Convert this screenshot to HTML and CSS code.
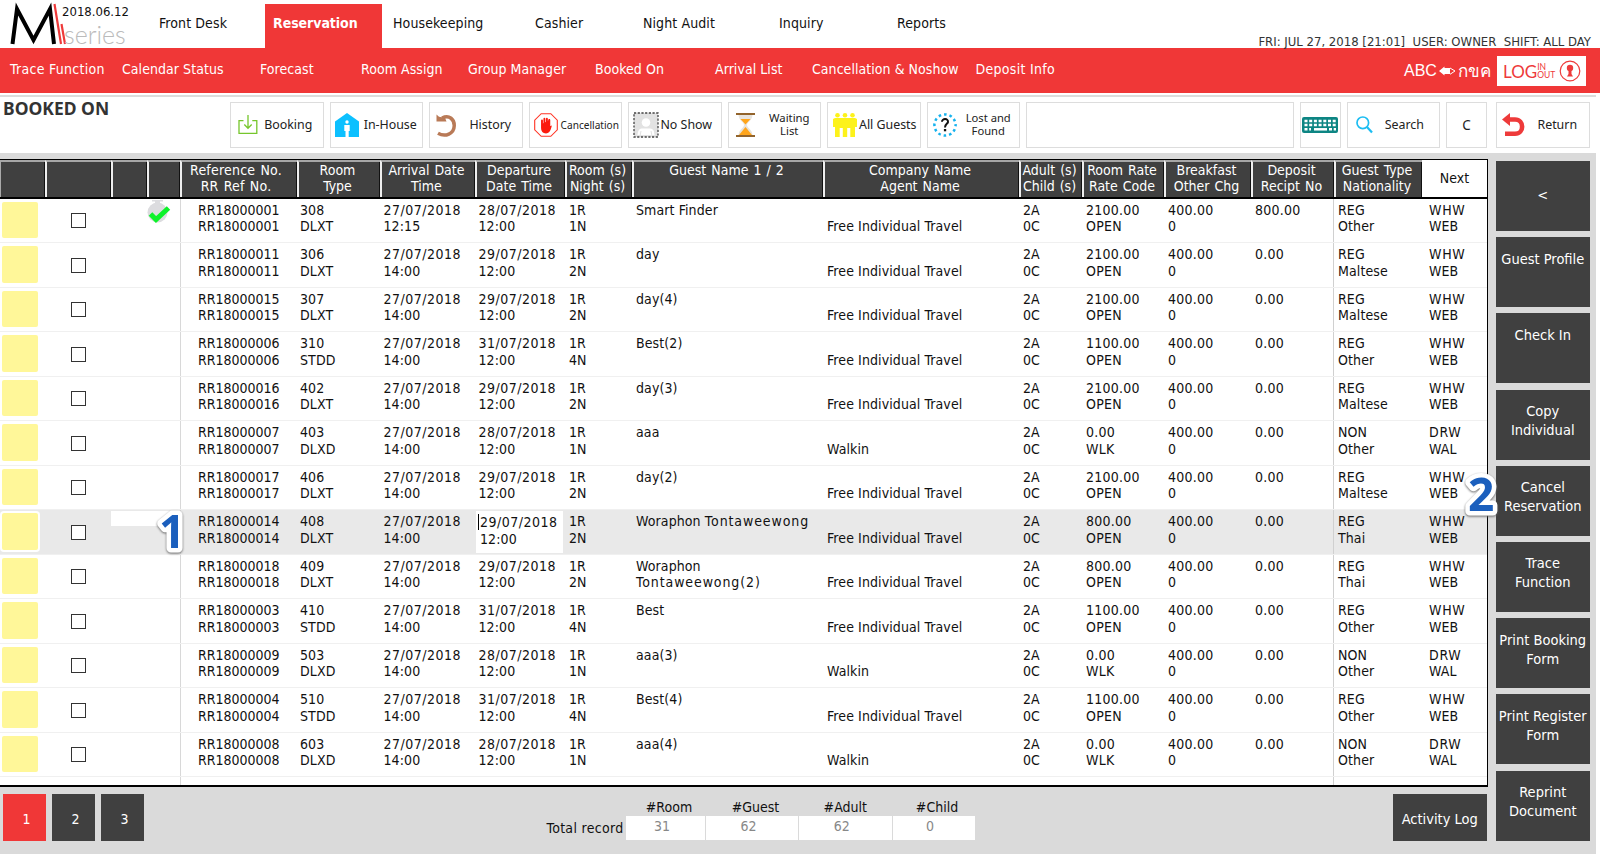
FILE: index.html
```html
<!DOCTYPE html>
<html lang="en">
  <head>
    <meta charset="UTF-8" />
    <title>Booked On</title>
    <link rel="stylesheet" href="styles.css">
  </head>
  <body>
    <header class="topbar">
      <div class="logo">
        <svg class="logo-mark" width="66" height="46" viewBox="0 0 66 46">
          <path d="M12.500 44 L17 9 L33.500 40 L50 9 L54 44" fill="none" stroke="#000" stroke-width="4" stroke-miterlimit="8" />
          <path d="M54.500 4 L61 44 M61.500 24 L65 44" stroke="#ee3a3a" stroke-width="2.200" />
        </svg>
        <div class="logo-text">
          <span class="logo-date">2018.06.12</span>
          <span class="logo-name">series</span>
        </div>
      </div>
      <nav class="main-nav">
        <a>Front Desk</a>
        <a class="active">Reservation</a>
        <a>Housekeeping</a>
        <a>Cashier</a>
        <a>Night Audit</a>
        <a>Inquiry</a>
        <a>Reports</a>
      </nav>
      <div class="session">FRI: JUL 27, 2018 [21:01]&nbsp; USER: OWNER&nbsp; SHIFT: ALL DAY</div>
    </header>

    <div class="subbar">
      <nav class="sub-nav">
        <a>Trace Function</a>
        <a>Calendar Status</a>
        <a>Forecast</a>
        <a>Room Assign</a>
        <a>Group Manager</a>
        <a>Booked On</a>
        <a>Arrival List</a>
        <a>Cancellation &amp; Noshow</a>
        <a>Deposit Info</a>
      </nav>
      <div class="lang">
        <span>ABC</span>
        <svg width="17" height="12" viewBox="0 0 17 12">
          <path d="M0 6 L5.500 1.500 V3 H11 V9 H5.500 V10.500 Z" fill="#fff" />
          <path d="M11 3 L16 6 L11 9.300" fill="none" stroke="#fff" stroke-width="1" />
        </svg>
        <span class="thai">กขค</span>
      </div>
      <div class="logout">
        <span class="log">LOG</span>
        <span class="inout"><span>IN</span><span>OUT</span></span>
        <svg width="22" height="22" viewBox="0 0 22 22">
          <circle cx="11" cy="11" r="9.800" fill="none" stroke="#ee3a3a" stroke-width="1.200" />
          <circle cx="11" cy="8" r="3.200" fill="#ee3a3a" />
          <path d="M9.500 9 H12.500 V14 L14 16.500 H8 L9.500 14 Z" fill="#ee3a3a" />
        </svg>
      </div>
    </div>

    <div class="toolbar">
      <h1>BOOKED ON</h1>
      <div class="tools">
        <button class="tool t-booking">
          <svg width="20" height="20" viewBox="0 0 20 20" fill="none" stroke="#76c62c" stroke-width="1.300">
            <path d="M5.500 5.700 H1 V18.300 H18.800 V5.700 H14.300" />
            <path d="M10 0 V13 M6.300 9.500 L10 13.300 L13.700 9.500" />
          </svg>
          <span>Booking</span>
        </button>
        <button class="tool t-inhouse">
          <svg width="24" height="24" viewBox="0 0 24 24">
            <path d="M12 0 L24 8.500 V24 H0 V8.500 Z" fill="#0cc0ff" />
            <circle cx="12" cy="9" r="1.700" fill="#fff" />
            <path d="M9.300 12 H14.700 V18 H13.700 V24 H10.500 V18 H9.300 Z" fill="#fff" />
          </svg>
          <span>In-House</span>
        </button>
        <button class="tool t-history">
          <svg width="20" height="23" viewBox="0 0 20 23">
            <path d="M0.500 0.500 L3 2.800 L9 3.800 L10.500 7.500 H0.500 Z" fill="#b97a57" />
            <path d="M6 4 C13.500 0.500 18.500 5.500 18.200 12 C18 19.500 9.500 23.500 2 19.300" fill="none" stroke="#b97a57" stroke-width="3.500" />
          </svg>
          <span>History</span>
        </button>
        <button class="tool t-cancel">
          <svg width="24" height="24" viewBox="0 0 24 24">
            <path d="M7.200 0.700 H16.800 L23.300 7.200 V16.800 L16.800 23.300 H7.200 L0.700 16.800 V7.200 Z" fill="#fff" stroke="#ff3324" stroke-width="1.100" />
            <path d="M8 11 V15 C8 18 9.500 19.500 12 19.500 C14.500 19.500 15.500 18 16.500 14 L15.300 14.500 V7 M8 12 V7.500 M10.400 12 V5.700 M12.900 12 V5.700 M15.200 12 V7" fill="#fb1b0e" stroke="#fb1b0e" stroke-width="1.900" stroke-linecap="round" />
          </svg>
          <span>Cancellation</span>
        </button>
        <button class="tool t-noshow">
          <svg width="26" height="26" viewBox="0 0 26 26">
            <rect x="1" y="1" width="24" height="24" fill="#e2e2e2" stroke="#444" stroke-width="1.300" stroke-dasharray="2.200 1.500" />
            <circle cx="13" cy="10.500" r="4.300" fill="#fff" />
            <path d="M4.500 23 C5 16 8.500 16.500 9 16.500 H17 C21 17 21 19 21.500 23 Z" fill="#fff" />
            <path d="M8 19 L7 24 M18 19 L19 24" stroke="#e2e2e2" />
          </svg>
          <span>No Show</span>
        </button>
        <button class="tool t-waiting">
          <svg width="19" height="24" viewBox="0 0 19 24">
            <path d="M2.500 2 C3 8 8 9 8 12 C8 15 3 16 2.500 22 H16.500 C16 16 11 15 11 12 C11 9 16 8 16.500 2 Z" fill="#e8e4de" />
            <path d="M4.500 6 H14.500 L9.500 11.500 Z M9.500 14 L16 22 H3 Z" fill="#ffa51c" />
            <path d="M0 1 H19 M0 23 H19" stroke="#93642c" stroke-width="2" />
          </svg>
          <span>Waiting<br />List</span>
        </button>
        <button class="tool t-guests">
          <svg width="24" height="24" viewBox="0 0 24 24" fill="#fdf21b">
            <circle cx="4.500" cy="2.300" r="2.300" /><circle cx="12" cy="2.300" r="2.300" /><circle cx="19.500" cy="2.300" r="2.300" />
            <path d="M0 6 L2 5 H22 L24 6 V14 H22 V24 H17.300 V15 H14.200 V24 H9.800 V15 H6.700 V24 H2 V14 H0 Z" />
          </svg>
          <span>All Guests</span>
        </button>
        <button class="tool t-lost">
          <svg width="24" height="24" viewBox="0 0 24 24">
            <circle cx="12" cy="12" r="10.600" fill="none" stroke="#16b2ee" stroke-width="2.500" stroke-dasharray="2.600 2.950" stroke-dashoffset="1.300" />
            <path d="M9 8.800 C9 5 15.500 5.300 15 9 C14.700 11 12 11 12 14.500" fill="none" stroke="#111" stroke-width="2" />
            <rect x="10.900" y="16" width="2.300" height="2.300" fill="#111" />
          </svg>
          <span>Lost and<br />Found</span>
        </button>
        <div class="tool tool-blank"></div>
        <button class="tool tool-keys">
          <svg width="36" height="16" viewBox="0 0 36 16">
            <rect width="36" height="16" rx="2" fill="#0d8583" />
            <path d="M2.500 4 H34 M2.500 8 H34" stroke="#fff" stroke-width="2.700" stroke-dasharray="3 1.700" />
            <path d="M2.500 12.300 H9 M27 12.300 H34" stroke="#fff" stroke-width="2.500" stroke-dasharray="3 1.700" />
            <path d="M12 12.300 H25" stroke="#fff" stroke-width="2.500" />
          </svg>
        </button>
        <button class="tool t-search">
          <svg width="17" height="18" viewBox="0 0 17 18" fill="none" stroke="#1cbdf2">
            <circle cx="6.800" cy="6.800" r="5.800" stroke-width="1.700" />
            <path d="M11 11 L16 16.500" stroke-width="2.200" />
          </svg>
          <span>Search</span>
        </button>
        <button class="tool tool-c">C</button>
        <button class="tool t-return">
          <svg width="23" height="24" viewBox="0 0 23 24">
            <path d="M0 6.500 L8 0 V13 Z" fill="#ee3a3a" />
            <path d="M6 6.500 H13 C22.500 6.500 22.500 20.800 13 20.800 H3" fill="none" stroke="#ee3a3a" stroke-width="4.600" />
          </svg>
          <span>Return</span>
        </button>
      </div>
    </div>

    <main class="main">
      <section class="content">
        <div class="grid">
          <div class="grid-head grid-cols">
            <div></div>
            <div></div>
            <div></div>
            <div></div>
            <div>Reference No.<br />RR Ref No.</div>
            <div>Room<br />Type</div>
            <div>Arrival Date<br />Time</div>
            <div>Departure<br />Date Time</div>
            <div>Room (s)<br />Night (s)</div>
            <div>Guest Name 1 / 2</div>
            <div>Company Name<br />Agent Name</div>
            <div>Adult (s)<br />Child (s)</div>
            <div>Room Rate<br />Rate Code</div>
            <div>Breakfast<br />Other Chg</div>
            <div>Deposit<br />Recipt No</div>
            <div>Guest Type<br />Nationality</div>
            <div class="next">Next</div>
          </div>
          <div id="rows"></div>
          <div class="grid-rest grid-cols"><div class="line-a"></div><div class="line-b"></div></div>
        </div>

        <footer class="footer">
          <div class="pages">
            <button class="current">1</button>
            <button>2</button>
            <button>3</button>
          </div>
          <div class="totals">
            <span></span>
            <span class="right">#Room</span>
            <span class="right">#Guest</span>
            <span>#Adult</span>
            <span class="right">#Child</span>
            <span class="total-label">Total record</span>
            <span class="num">31</span>
            <span class="num">62</span>
            <span class="num">62</span>
            <span class="num">0</span>
          </div>
          <button class="activity">Activity Log</button>
        </footer>
      </section>

      <aside class="side">
        <button class="back">&lt;</button>
        <button>Guest Profile</button>
        <button>Check In</button>
        <button>Copy<br />Individual</button>
        <button>Cancel<br />Reservation</button>
        <button>Trace<br />Function</button>
        <button>Print Booking<br />Form</button>
        <button>Print Register<br />Form</button>
        <button>Reprint<br />Document</button>
      </aside>
    </main>

    <svg class="step step-1" width="44" height="52" viewBox="0 0 44 52"><text x="8" y="42">1</text></svg>
    <svg class="step step-2" width="44" height="52" viewBox="0 0 44 52"><text x="8" y="42">2</text></svg>

    <script src="rows.js"></script>
  </body>
</html>
```
FILE: styles.css
```css
* {
  box-sizing: border-box;
}
body {
  margin: 0;
  width: 1600px;
  height: 855px;
  overflow: hidden;
  position: relative;
  background: #fff;
  color: #111;
  font-family: "DejaVu Sans Condensed", "DejaVu Sans", sans-serif;
  font-stretch: condensed;
  font-size: 14px;
}
button {
  font: inherit;
  border: none;
  padding: 0;
  margin: 0;
  cursor: pointer;
}
svg {
  display: block;
  flex: none;
}

/* top bar */
.topbar {
  display: flex;
  height: 48px;
}
.logo {
  display: flex;
  width: 159px;
}
.logo-text {
  display: flex;
  flex-direction: column;
  margin-left: -4px;
  width: 70px;
}
.logo-date {
  font-size: 13px;
  line-height: 16px;
  padding-top: 4px;
}
.logo-name {
  font-family: Lato, sans-serif;
  font-weight: 300;
  font-stretch: normal;
  font-size: 25px;
  line-height: 29px;
  padding-left: 2px;
  color: #bbb;
}
.main-nav {
  display: grid;
  grid-template-columns: 106px 128px 142px 108px 136px 118px 100px;
  line-height: 38px;
  letter-spacing: 0.100px;
}
.main-nav .active {
  background: #f03737;
  color: #fff;
  font-weight: bold;
  letter-spacing: -0.050px;
  width: 117px;
  margin-top: 4px;
  padding-left: 8px;
}
.main-nav a:not(.active) {
  padding-top: 4px;
}
.session {
  margin-left: auto;
  padding: 34px 9px 0 0;
  font-size: 13px;
  line-height: 16px;
  white-space: nowrap;
  color: #333;
}

/* red bar */
.subbar {
  display: flex;
  height: 45px;
  background: #f03737;
  color: #fff;
}
.sub-nav {
  display: grid;
  grid-template-columns: 112px 138px 101px 107px 127px 120px 97px 163.500px 338.500px;
  padding-left: 10px;
  line-height: 42px;
  letter-spacing: 0.050px;
  white-space: nowrap;
  width: 1404px;
}
.sub-nav a:first-child,
.sub-nav a:last-child {
  letter-spacing: 0.300px;
}
.lang {
  display: flex;
  align-items: center;
  gap: 2px;
  width: 93px;
  font-family: "Liberation Sans", sans-serif;
  font-stretch: normal;
  font-size: 16px;
}
.thai {
  font-size: 17px;
}
.logout {
  display: flex;
  align-items: center;
  align-self: flex-start;
  margin-top: 8px;
  width: 89px;
  height: 30px;
  padding-left: 6px;
  background: #fff;
  color: #ee3a3a;
  font-family: Lato, sans-serif;
  font-stretch: normal;
}
.log {
  font-size: 17px;
}
.inout {
  display: flex;
  flex-direction: column;
  width: 22px;
  font-size: 8.500px;
  line-height: 8px;
}

/* toolbar */
.toolbar {
  display: flex;
  width: 1596px;
  height: 60px;
  margin-top: 2px;
  border-top: 2px solid #dcdcdc;
}
.toolbar h1 {
  margin: 0;
  width: 230px;
  padding-left: 3px;
  font-family: "Noto Sans", sans-serif;
  font-size: 17.500px;
  line-height: 23px;
  color: #333;
}
.tools {
  display: grid;
  grid-template-columns: repeat(8, 93.500px) 267.500px 41px 93.500px 41px 93.500px;
  column-gap: 6px;
  padding-top: 5px;
  height: 51px;
}
.tool {
  display: flex;
  align-items: center;
  border: 1px solid #ddd;
  background: #fff;
  color: #222;
  font-family: "Noto Sans", sans-serif;
  font-stretch: normal;
  font-size: 12.400px;
  line-height: 13px;
  text-align: center;
  white-space: nowrap;
}
.tool span {
  flex: 1;
  padding-bottom: 2px;
}
.t-booking {
  padding: 0 8px 0 7px;
}
.t-booking span {
  padding-left: 4px;
}
.t-inhouse {
  padding: 0 4px 0 4px;
}
.t-inhouse span {
  padding-left: 4px;
}
.t-history {
  padding: 0 10px 0 6px;
}
.t-history span {
  padding-left: 13px;
}
.t-cancel {
  padding: 0 2px 0 4px;
  font-size: 10.100px;
}
.t-cancel span {
  padding: 0 0 0 3px;
}
.t-noshow {
  padding: 0 7px 0 4px;
}
.t-waiting {
  padding: 0 10px 0 7px;
  font-size: 11.300px;
}
.t-waiting span {
  padding-left: 14px;
}
.t-guests {
  padding: 0 2px 0 5px;
}
.t-guests span {
  padding-left: 1px;
}
.t-lost {
  padding: 0 8px 0 5px;
  font-size: 11.200px;
}
.t-lost span {
  padding-left: 9px;
}
.tool-keys {
  justify-content: center;
}
.t-search {
  padding: 0 13px 0 8px;
}
.t-search span {
  padding-left: 10px;
}
.tool-c {
  justify-content: center;
  font-size: 13.500px;
}
.t-return {
  margin-left: 3px;
  width: 93.500px;
  padding: 0 11px 0 5px;
}
.t-return span {
  padding-left: 12px;
}

/* main area */
.main {
  display: flex;
  width: 1596px;
  height: 701px;
  margin-top: -2px;
  padding-top: 6px;
  background: #dadada;
}
.content {
  width: 1488px;
}
.grid {
  height: 628px;
  border: solid #000;
  border-width: 1.500px 1.500px 2px 0;
  background: #fff;
  overflow: hidden;
}
.grid-cols {
  display: grid;
  grid-template-columns: 45px 66px 36px 33px 117px 83px 95px 90px 67px 191px 196px 63px 82px 87px 83px 88px 65px;
}
.grid-head {
  height: 38.500px;
  border-bottom: 2px solid #000;
  background: #404040;
  color: #fff;
  text-align: center;
  line-height: 16.400px;
  white-space: nowrap;
  word-spacing: 1px;
}
.grid-head div {
  padding-right: 4px;
  border-left: 2px solid #eee;
  border-top: 2px solid #a6a6a6;
  box-shadow: inset -1px 0 #111;
}
.grid-head div:first-child {
  border-left: 1px solid #aaa;
}
.grid-head div:nth-child(5) {
  letter-spacing: 0.200px;
  padding-right: 7px;
}
.grid-head .next {
  padding-right: 0;
  border: none;
  box-shadow: none;
  background: #fff;
  color: #111;
  line-height: 36px;
}
.row {
  height: 44.530px;
  border-bottom: 1.500px solid #f0f0f0;
}
.cell {
  padding: 3.300px 0 0 4px;
  line-height: 16.400px;
  letter-spacing: 0.100px;
  white-space: pre-line;
}
.cell.ref {
  padding-left: 17px;
  border-left: 1.500px solid #d8d8d8;
  letter-spacing: 0;
}
.cell.room {
  padding-left: 3px;
}
.cell.date {
  padding-left: 3.500px;
}
.cell.date::first-line {
  letter-spacing: 0.500px;
}
.cell.money {
  letter-spacing: 0.250px;
}
.surname {
  letter-spacing: 0.900px;
}
.cell.type {
  margin-left: -1px;
  border-left: 1px solid #d0d0d0;
}
.cell.next-code {
  padding-left: 7px;
}
.cell.next-code::first-line {
  letter-spacing: 0.700px;
}
.mark {
  display: block;
  width: 36px;
  height: 36.500px;
  margin: 3px 0 0 2px;
  border-radius: 2px;
  background: #fff799;
}
.check {
  display: block;
  width: 15px;
  height: 15px;
  margin: 14.500px 0 0 25.500px;
  border: 1px solid #333;
  background: #fff;
}
.watch {
  margin-top: 1px;
}
.row.selected {
  background: #e9e9e9;
}
.selected .mark {
  box-shadow: 0 0 0 2px #fff;
}
.selected .patch {
  width: 69px;
  height: 15px;
  margin-top: 1px;
  background: #fff;
}
.selected .editing {
  width: 87px;
  height: 42px;
  margin: 1px 0 0 1px;
  padding-left: 4px;
  background: linear-gradient(#000, #000) 2px 3px / 1px 16px no-repeat, #fff;
}
.grid-rest {
  height: 12px;
}
.line-a {
  grid-column: 5;
  border-left: 1.500px solid #d8d8d8;
}
.line-b {
  grid-column: 16;
  margin-left: -1px;
  border-left: 1px solid #d0d0d0;
}

/* footer */
.footer {
  display: flex;
  padding: 6.500px 1.500px 0 3px;
}
.pages {
  display: flex;
  gap: 6px;
  width: 542px;
}
.pages button,
.activity,
.side button {
  background: #404040;
  color: #fff;
}
.pages button {
  width: 43px;
  height: 47px;
  padding: 4px 0 0 4px;
}
.pages .current {
  background: #f03737;
}
.totals {
  display: grid;
  grid-template-columns: 80px 79px 92px 92.500px 82px;
  grid-template-rows: 22px 24px;
  column-gap: 1px;
  text-align: center;
  line-height: 26px;
}
.totals .right {
  padding-left: 7px;
}
.total-label {
  line-height: 24px;
  letter-spacing: 0.300px;
  white-space: nowrap;
}
.num {
  padding-right: 7px;
  background: #fff;
  color: #888;
  line-height: 21px;
}
.activity {
  width: 93.500px;
  height: 47px;
  margin-left: auto;
  padding-top: 4px;
  font-size: 14.500px;
}

/* side buttons */
.side {
  display: flex;
  flex-direction: column;
  gap: 6.200px;
  width: 93.500px;
  margin: 2px 0 0 8px;
}
.side button {
  display: flex;
  justify-content: center;
  height: 70px;
  padding-top: 12.500px;
  font-size: 14.500px;
  line-height: 19px;
  white-space: nowrap;
}
.side .back {
  padding-top: 25px;
}

/* numbered steps over the screen */
.step {
  position: absolute;
  overflow: visible;
  filter: drop-shadow(0 1px 1px #666);
}
.step text {
  font-family: "Noto Sans", sans-serif;
  font-stretch: normal;
  font-weight: bold;
  font-size: 46px;
  fill: #1b5fbd;
  stroke: #fff;
  stroke-width: 9px;
  stroke-linejoin: round;
  paint-order: stroke;
}
.step-1 {
  left: 151px;
  top: 506px;
}
.step-2 {
  left: 1460px;
  top: 469px;
}
```
FILE: rows.js
```js
// ref, room, type, arrival time, departure day, nights, guest, agent, rate, code, deposit, guest type, nationality, next
const bookings = [
  ["RR18000001", "308", "DLXT", "12:15", "28", "1N", "Smart Finder", "Free Individual Travel", "2100.00", "OPEN", "800.00", "REG", "Other", "WHW\nWEB"],
  ["RR18000011", "306", "DLXT", "14:00", "29", "2N", "day", "Free Individual Travel", "2100.00", "OPEN", "0.00", "REG", "Maltese", "WHW\nWEB"],
  ["RR18000015", "307", "DLXT", "14:00", "29", "2N", "day(4)", "Free Individual Travel", "2100.00", "OPEN", "0.00", "REG", "Maltese", "WHW\nWEB"],
  ["RR18000006", "310", "STDD", "14:00", "31", "4N", "Best(2)", "Free Individual Travel", "1100.00", "OPEN", "0.00", "REG", "Other", "WHW\nWEB"],
  ["RR18000016", "402", "DLXT", "14:00", "29", "2N", "day(3)", "Free Individual Travel", "2100.00", "OPEN", "0.00", "REG", "Maltese", "WHW\nWEB"],
  ["RR18000007", "403", "DLXD", "14:00", "28", "1N", "aaa", "Walkin", "0.00", "WLK", "0.00", "NON", "Other", "DRW\nWAL"],
  ["RR18000017", "406", "DLXT", "14:00", "29", "2N", "day(2)", "Free Individual Travel", "2100.00", "OPEN", "0.00", "REG", "Maltese", "WHW\nWEB"],
  ["RR18000014", "408", "DLXT", "14:00", "29", "2N", 'Woraphon <span class="surname">Tontaweewong</span>', "Free Individual Travel", "800.00", "OPEN", "0.00", "REG", "Thai", "WHW\nWEB"],
  ["RR18000018", "409", "DLXT", "14:00", "29", "2N", 'Woraphon\n<span class="surname">Tontaweewong(2)</span>', "Free Individual Travel", "800.00", "OPEN", "0.00", "REG", "Thai", "WHW\nWEB"],
  ["RR18000003", "410", "STDD", "14:00", "31", "4N", "Best", "Free Individual Travel", "1100.00", "OPEN", "0.00", "REG", "Other", "WHW\nWEB"],
  ["RR18000009", "503", "DLXD", "14:00", "28", "1N", "aaa(3)", "Walkin", "0.00", "WLK", "0.00", "NON", "Other", "DRW\nWAL"],
  ["RR18000004", "510", "STDD", "14:00", "31", "4N", "Best(4)", "Free Individual Travel", "1100.00", "OPEN", "0.00", "REG", "Other", "WHW\nWEB"],
  ["RR18000008", "603", "DLXD", "14:00", "28", "1N", "aaa(4)", "Walkin", "0.00", "WLK", "0.00", "NON", "Other", "DRW\nWAL"],
];

const selected = 7;

const watch =
  '<svg class="watch" width="24" height="24" viewBox="0 0 24 24">' +
  '<circle cx="10.500" cy="12.500" r="10" fill="#dcdcdf"/><path d="M5 0 H16 V1.500 H13 V4 H8 V1.500 H5 Z" fill="#dcdcdf"/>' +
  '<path d="M3.500 14 L9 19.500 L21.500 8" fill="none" stroke="#0df22a" stroke-width="5"/></svg>';

function cell(text, cls) {
  return `<div class="cell ${cls || ""}">${text}</div>`;
}

document.getElementById("rows").innerHTML = bookings
  .map(function (b, i) {
    const [ref, room, type, time, day, nights, guest, agent, rate, code, deposit, guestType, nation, next] = b;
    return (
      `<div class="row grid-cols ${i === selected ? "selected" : ""}">` +
      '<div><span class="mark"></span></div>' +
      '<div><span class="check"></span></div>' +
      '<div><div class="patch"></div></div>' +
      `<div>${i === 0 ? watch : ""}</div>` +
      cell(ref + "\n" + ref, "ref") +
      cell(room + "\n" + type, "room") +
      cell("27/07/2018\n" + time, "date") +
      cell(day + "/07/2018\n12:00", i === selected ? "date editing" : "date") +
      cell("1R\n" + nights) +
      cell(guest) +
      cell("\n" + agent) +
      cell("2A\n0C") +
      cell(rate + "\n" + code, "money") +
      cell("400.00\n0", "money") +
      cell(deposit, "money") +
      cell(guestType + "\n" + nation, "type") +
      cell(next, "next-code") +
      "</div>"
    );
  })
  .join("");
```
